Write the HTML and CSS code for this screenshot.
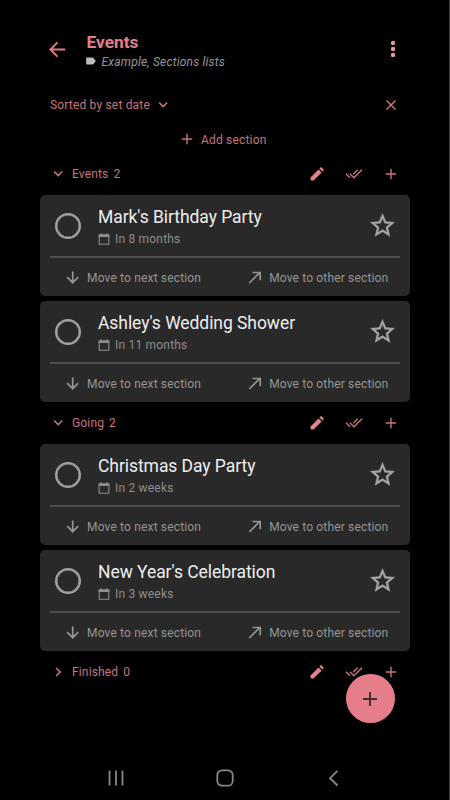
FILE: index.html
```
<!DOCTYPE html>
<html lang="en">
<head>
<meta charset="utf-8">
<title>Events</title>
<link rel="stylesheet" href="styles.css">
</head>
<body>
<svg class="defs" aria-hidden="true">
  <symbol id="back" viewBox="0 0 20 20"><path d="M18 10H3M10 2.5L2.5 10l7.5 7.5"/></symbol>
  <symbol id="tag" viewBox="0 0 10 8"><path class="solid" d="M1 0.5h5.2q.8 0 1.3.6L9.8 4 7.500 6.900q-.5.6-1.300.6H1q-.9 0-.9-.9V1.400Q.1.5 1 .5z"/></symbol>
  <symbol id="dots" viewBox="0 0 6 18"><circle class="solid" cx="3" cy="3" r="2.200"/><circle class="solid" cx="3" cy="9" r="2.200"/><circle class="solid" cx="3" cy="15" r="2.200"/></symbol>
  <symbol id="down" viewBox="0 0 10 10"><path d="M1.200 2.500l4 4 4-4"/></symbol>
  <symbol id="right" viewBox="0 0 10 10"><path d="M3.200 1l4 4-4 4"/></symbol>
  <symbol id="close" viewBox="0 0 12 12"><path d="M1.500 1.500l9 9M10.500 1.500l-9 9"/></symbol>
  <symbol id="plus" viewBox="0 0 12 12"><path d="M6 .8v10.400M.8 6h10.400"/></symbol>
  <symbol id="pencil" viewBox="0 0 14 14"><path class="solid" d="M.5 12.200v-1.700L8.600 2.400l3 3-8.100 8.100H1.800q-1.300 0-1.300-1.300zM9.400 1.600l1-1q.7-.6 1.400 0l1.600 1.600q.6.7 0 1.400l-1 1z"/></symbol>
  <symbol id="checks" viewBox="0 0 18 12"><path d="M1 5.700l4 4M4.900 5.700l4 4L17 1.700M8.200 6.200l4.500-4.500"/></symbol>
  <symbol id="calendar" viewBox="0 0 12 12"><path d="M1.200 2h9.600v9.300H1.200z"/><path class="solid" d="M.7 1.500h10.600v2.400H.7zM2.500.3h1.300v1.500H2.500zM8.200.3h1.300v1.500H8.200z"/></symbol>
  <symbol id="star" viewBox="0 0 24 24"><path class="solid" d="M22 9.240l-7.190-.62L12 2 9.190 8.630 2 9.240l5.460 4.730L5.820 21 12 17.270 18.180 21l-1.630-7.030L22 9.240zM12 15.400l-3.760 2.270 1-4.280-3.320-2.880 4.380-.38L12 6.100l1.710 4.040 4.380.38-3.320 2.880 1 4.280L12 15.400z"/></symbol>
  <symbol id="arrow-down" viewBox="0 0 14 14"><path d="M6.700.6v11M1.200 6.200l5.500 5.500 5.500-5.500"/></symbol>
  <symbol id="arrow-out" viewBox="0 0 14 14"><path d="M1.300 12L11.800 1.500M4.500 1.500h7.700v7.700"/></symbol>
  <symbol id="plus-large" viewBox="0 0 16 16"><path d="M8 1v14M1 8h14"/></symbol>
</svg>
<div class="screen">
  <header class="topbar">
    <svg class="back"><use href="#back"/></svg>
    <div class="heading">
      <h1>Events</h1>
      <div class="tags"><svg class="tag"><use href="#tag"/></svg><span>Example, Sections lists</span></div>
    </div>
    <svg class="dots"><use href="#dots"/></svg>
  </header>
  <div class="sortbar">
    <span>Sorted by set date</span>
    <svg class="chev"><use href="#down"/></svg>
    <svg class="close"><use href="#close"/></svg>
  </div>
  <div class="add"><svg class="plus"><use href="#plus"/></svg><span>Add section</span></div>
  <main>
    <div class="section">
      <svg class="chev"><use href="#down"/></svg><span class="name">Events</span><span>2</span>
      <svg class="pencil"><use href="#pencil"/></svg><svg class="checks"><use href="#checks"/></svg><svg class="plus"><use href="#plus"/></svg>
    </div>
    <article class="card">
      <div class="info"><i class="circle"></i><div class="text"><h2>Mark's Birthday Party</h2><p><svg class="cal"><use href="#calendar"/></svg><span>In 8 months</span></p></div><svg class="star"><use href="#star"/></svg></div>
      <div class="moves"><svg><use href="#arrow-down"/></svg><span>Move to next section</span><svg class="out"><use href="#arrow-out"/></svg><span>Move to other section</span></div>
    </article>
    <article class="card">
      <div class="info"><i class="circle"></i><div class="text"><h2>Ashley's Wedding Shower</h2><p><svg class="cal"><use href="#calendar"/></svg><span>In 11 months</span></p></div><svg class="star"><use href="#star"/></svg></div>
      <div class="moves"><svg><use href="#arrow-down"/></svg><span>Move to next section</span><svg class="out"><use href="#arrow-out"/></svg><span>Move to other section</span></div>
    </article>
    <div class="section">
      <svg class="chev"><use href="#down"/></svg><span class="name">Going</span><span>2</span>
      <svg class="pencil"><use href="#pencil"/></svg><svg class="checks"><use href="#checks"/></svg><svg class="plus"><use href="#plus"/></svg>
    </div>
    <article class="card">
      <div class="info"><i class="circle"></i><div class="text"><h2>Christmas Day Party</h2><p><svg class="cal"><use href="#calendar"/></svg><span>In 2 weeks</span></p></div><svg class="star"><use href="#star"/></svg></div>
      <div class="moves"><svg><use href="#arrow-down"/></svg><span>Move to next section</span><svg class="out"><use href="#arrow-out"/></svg><span>Move to other section</span></div>
    </article>
    <article class="card">
      <div class="info"><i class="circle"></i><div class="text"><h2>New Year's Celebration</h2><p><svg class="cal"><use href="#calendar"/></svg><span>In 3 weeks</span></p></div><svg class="star"><use href="#star"/></svg></div>
      <div class="moves"><svg><use href="#arrow-down"/></svg><span>Move to next section</span><svg class="out"><use href="#arrow-out"/></svg><span>Move to other section</span></div>
    </article>
    <div class="section">
      <svg class="chev"><use href="#right"/></svg><span class="name">Finished</span><span>0</span>
      <svg class="pencil"><use href="#pencil"/></svg><svg class="checks"><use href="#checks"/></svg><svg class="plus"><use href="#plus"/></svg>
    </div>
  </main>
  <button class="fab" aria-label="Add"><svg><use href="#plus-large"/></svg></button>
  <nav>
    <svg viewBox="0 0 18 18"><path d="M2.500 1.500v15M9 1.500v15M15.500 1.500v15"/></svg>
    <svg viewBox="0 0 18 18"><rect x="1.300" y="1.300" width="15.400" height="15.400" rx="4.800"/></svg>
    <svg viewBox="0 0 18 18"><path d="M12.500 1.800L5 9.200l7.500 7.300"/></svg>
  </nav>
</div>
</body>
</html>
```

FILE: styles.css
```
* { box-sizing: border-box; }
body { margin: 0; background: #000; font-family: Roboto, sans-serif; }
h1, h2, p { margin: 0; }
svg { display: block; flex: none; fill: none; stroke: currentColor; stroke-width: 1.6; }
.solid { fill: currentColor; stroke: none; }
.defs { display: none; }

.screen {
  position: relative;
  display: flex;
  flex-direction: column;
  width: 450px;
  height: 800px;
  padding: 28px 39px 0 40px;
  border-right: 1px solid #3c3c3c;
  color: #c8747c;
  overflow: hidden;
}

.topbar { display: flex; height: 60px; padding: 0 14.500px 0 8px; }
.back { width: 19px; height: 19px; margin-top: 12px; stroke-width: 2; color: #df7c87; }
.heading { flex: 1; margin-left: 19.500px; }
h1 { height: 28px; line-height: 28px; font-size: 17.300px; font-weight: 700; color: #e47f8a; }
.tags { display: flex; align-items: center; height: 12px; font-size: 12px; font-style: italic; color: #999; letter-spacing: .19px; }
.tag { width: 10px; height: 8px; margin: -2px 6px 0 -1px; color: #bbb; }
.dots { width: 6px; height: 18px; margin-top: 12px; color: #eb98a1; }

.sortbar { display: flex; align-items: center; height: 34px; padding: 0 13px 0 10px; font-size: 12px; letter-spacing: .18px; }
.sortbar .chev { margin-left: 8px; }
.chev { width: 10px; height: 10px; }
.close { width: 12px; height: 12px; margin-left: auto; stroke-width: 1.5; }
.plus { width: 12px; height: 12px; stroke-width: 1.4; }
.add { display: flex; align-items: center; height: 35px; padding: 0 0 0 141px; gap: 8px; font-size: 12px; letter-spacing: .18px; }
.add .plus { margin-top: -1px; }

main { margin-top: -4px; }
.section { display: flex; align-items: center; height: 42px; padding: 0 13px; font-size: 12px; letter-spacing: .15px; }
.section .name { margin: 0 5px 0 9px; }
.pencil { width: 14px; height: 14px; margin: 0 21px 0 auto; color: #e4838d; }
.checks { width: 18px; height: 12px; margin-right: 22px; stroke-width: 1.4; }

.card { height: 101px; background: #292929; border-radius: 5px; color: #959595; }
.card + .card { margin-top: 5px; }
.info { display: flex; height: 63px; margin: 0 10px; padding-left: 5px; border-bottom: 2px solid #4e4e4e; }
.circle { width: 26px; height: 26px; margin-top: 18px; border: 2px solid #a2a2a2; border-radius: 50%; box-shadow: inset 0 0 0 .5px #a2a2a2; }
.text { flex: 1; margin-left: 17px; padding-top: 11px; }
h2 { height: 22px; line-height: 22px; font-size: 17.500px; font-weight: 400; letter-spacing: -.06px; color: #eee; white-space: nowrap; }
p { display: flex; align-items: center; height: 22px; gap: 5px; font-size: 12px; letter-spacing: .2px; color: #8d8d8d; }
.cal { width: 12px; height: 12px; stroke-width: 1.1; }
.star { width: 29px; height: 29px; margin: 16px 3.500px 0 0; color: #a6a6a6; }
.star, #star .solid { stroke: currentColor; stroke-width: .3; }
.moves { display: flex; align-items: center; height: 38px; padding: 1px 0 0 26px; font-size: 12px; letter-spacing: .16px; }
.moves svg { width: 14px; height: 14px; margin-right: 7px; stroke-width: 1.7; }
.moves .out { margin-left: 47px; }

.fab { position: absolute; left: 346px; top: 674px; width: 49px; height: 49px; padding: 0; border: 0; border-radius: 50%; background: #e57e8a; color: #432b2e; display: grid; place-items: center; }
.fab svg { width: 16px; height: 16px; margin-right: 1px; stroke-width: 1.9; }

nav { display: flex; justify-content: space-between; margin-top: auto; padding: 0 67px 13px 67px; color: #888; }
nav svg { width: 18px; height: 18px; stroke-width: 1.8; }
```
